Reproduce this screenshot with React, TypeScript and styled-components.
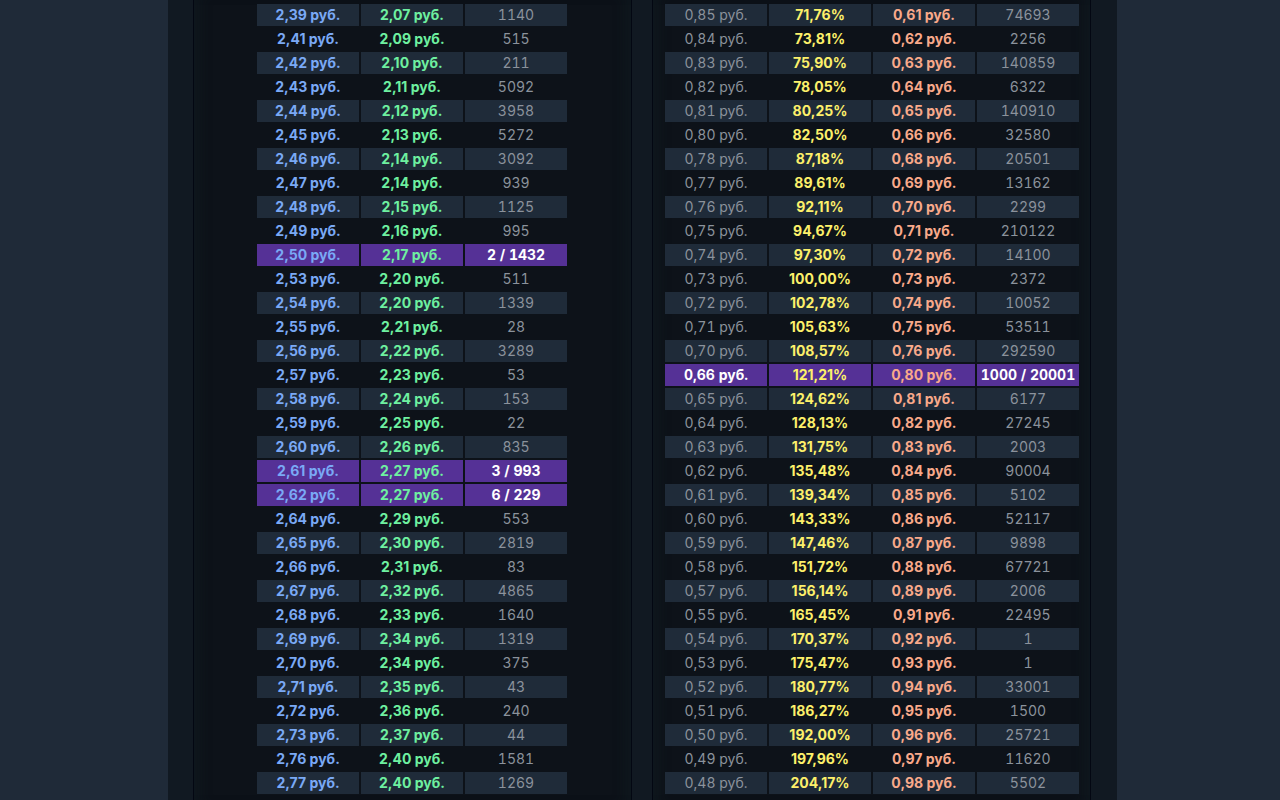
import React from 'react';
import styled, {createGlobalStyle} from 'styled-components';

const Global_Style = createGlobalStyle`
  html, body {
    margin: 0;
    height: 800px;
    overflow: hidden;
    background: #1f2a38;
  }
`;

const Page = styled.div`
  width: 1280px;
  height: 800px;
  overflow: hidden;
  display: flex;
  justify-content: flex-start;
  padding-left: 168px;
  box-sizing: border-box;
  font-family: Inter, 'Noto Sans', sans-serif;
`;

const Wrapper = styled.div`
  width: 949px;
  height: 800px;
  background: #111922;
  display: flex;
  padding-left: 25px;
  box-sizing: border-box;
  gap: 20px;
`;

const Panel = styled.div<{$width: number; $pad: number}>`
  width: ${(p) => p.$width}px;
  height: 800px;
  box-sizing: border-box;
  background: #0d1219;
  border-left: 1px solid #030712;
  border-right: 1px solid #030712;
  box-shadow: inset 14px 0 14px -10px rgba(20, 36, 44, 0.35),
    inset -14px 0 14px -10px rgba(20, 36, 44, 0.35);
  padding-left: ${(p) => p.$pad}px;
  padding-top: 4px;
  display: flex;
  flex-direction: column;
`;

const Row = styled.div<{$cols: number}>`
  display: grid;
  grid-template-columns: repeat(${(p) => p.$cols}, 102px);
  column-gap: 2px;
  height: 24px;
  flex-shrink: 0;
`;

type Tone = 'blue' | 'green' | 'muted' | 'yellow' | 'orange' | 'white';

const tones: Record<Tone, string> = {
  blue: '#7aa9f5',
  green: '#6ef0a0',
  muted: '#8b929c',
  yellow: '#fdf06a',
  orange: '#f9a98a',
  white: '#ffffff',
};

const Cell = styled.div<{$tone: Tone; $striped: boolean; $active: boolean}>`
  height: 22px;
  box-sizing: border-box;
  padding-bottom: 1px;
  display: flex;
  align-items: center;
  justify-content: center;
  font-size: 14px;
  white-space: nowrap;
  font-variant-numeric: ${(p) =>
    p.$tone === 'muted' || p.$tone === 'white' ? 'tabular-nums' : 'normal'};
  color: ${(p) => tones[p.$tone]};
  font-weight: ${(p) => (p.$tone === 'muted' ? 400 : 700)};
  background: ${(p) =>
    p.$active ? '#553196' : p.$striped ? '#1f2b39' : 'transparent'};
`;

const left_rows = [
  ['2,39', '2,07', '1140'],
  ['2,41', '2,09', '515'],
  ['2,42', '2,10', '211'],
  ['2,43', '2,11', '5092'],
  ['2,44', '2,12', '3958'],
  ['2,45', '2,13', '5272'],
  ['2,46', '2,14', '3092'],
  ['2,47', '2,14', '939'],
  ['2,48', '2,15', '1125'],
  ['2,49', '2,16', '995'],
  ['2,50', '2,17', '2 / 1432'],
  ['2,53', '2,20', '511'],
  ['2,54', '2,20', '1339'],
  ['2,55', '2,21', '28'],
  ['2,56', '2,22', '3289'],
  ['2,57', '2,23', '53'],
  ['2,58', '2,24', '153'],
  ['2,59', '2,25', '22'],
  ['2,60', '2,26', '835'],
  ['2,61', '2,27', '3 / 993'],
  ['2,62', '2,27', '6 / 229'],
  ['2,64', '2,29', '553'],
  ['2,65', '2,30', '2819'],
  ['2,66', '2,31', '83'],
  ['2,67', '2,32', '4865'],
  ['2,68', '2,33', '1640'],
  ['2,69', '2,34', '1319'],
  ['2,70', '2,34', '375'],
  ['2,71', '2,35', '43'],
  ['2,72', '2,36', '240'],
  ['2,73', '2,37', '44'],
  ['2,76', '2,40', '1581'],
  ['2,77', '2,40', '1269'],
];

const right_rows = [
  ['0,85', '71,76%', '0,61', '74693'],
  ['0,84', '73,81%', '0,62', '2256'],
  ['0,83', '75,90%', '0,63', '140859'],
  ['0,82', '78,05%', '0,64', '6322'],
  ['0,81', '80,25%', '0,65', '140910'],
  ['0,80', '82,50%', '0,66', '32580'],
  ['0,78', '87,18%', '0,68', '20501'],
  ['0,77', '89,61%', '0,69', '13162'],
  ['0,76', '92,11%', '0,70', '2299'],
  ['0,75', '94,67%', '0,71', '210122'],
  ['0,74', '97,30%', '0,72', '14100'],
  ['0,73', '100,00%', '0,73', '2372'],
  ['0,72', '102,78%', '0,74', '10052'],
  ['0,71', '105,63%', '0,75', '53511'],
  ['0,70', '108,57%', '0,76', '292590'],
  ['0,66', '121,21%', '0,80', '1000 / 20001'],
  ['0,65', '124,62%', '0,81', '6177'],
  ['0,64', '128,13%', '0,82', '27245'],
  ['0,63', '131,75%', '0,83', '2003'],
  ['0,62', '135,48%', '0,84', '90004'],
  ['0,61', '139,34%', '0,85', '5102'],
  ['0,60', '143,33%', '0,86', '52117'],
  ['0,59', '147,46%', '0,87', '9898'],
  ['0,58', '151,72%', '0,88', '67721'],
  ['0,57', '156,14%', '0,89', '2006'],
  ['0,55', '165,45%', '0,91', '22495'],
  ['0,54', '170,37%', '0,92', '1'],
  ['0,53', '175,47%', '0,93', '1'],
  ['0,52', '180,77%', '0,94', '33001'],
  ['0,51', '186,27%', '0,95', '1500'],
  ['0,50', '192,00%', '0,96', '25721'],
  ['0,49', '197,96%', '0,97', '11620'],
  ['0,48', '204,17%', '0,98', '5502'],
];

export default function App() {
  return (
    <>
      <Global_Style />
      <Page>
        <Wrapper>
          <Panel $width={439} $pad={63}>
            {left_rows.map((row, idx) => {
              const active = row[2].includes('/');
              return (
                <Row $cols={3} key={idx}>
                  <Cell $tone='blue' $striped={idx % 2 === 0} $active={active}>
                    {row[0]} руб.
                  </Cell>
                  <Cell $tone='green' $striped={idx % 2 === 0} $active={active}>
                    {row[1]} руб.
                  </Cell>
                  <Cell
                    $tone={active ? 'white' : 'muted'}
                    $striped={idx % 2 === 0}
                    $active={active}>
                    {row[2]}
                  </Cell>
                </Row>
              );
            })}
          </Panel>
          <Panel $width={439} $pad={12}>
            {right_rows.map((row, idx) => {
              const active = row[3].includes('/');
              return (
                <Row $cols={4} key={idx}>
                  <Cell
                    $tone={active ? 'white' : 'muted'}
                    $striped={idx % 2 === 0}
                    $active={active}>
                    {row[0]} руб.
                  </Cell>
                  <Cell $tone='yellow' $striped={idx % 2 === 0} $active={active}>
                    {row[1]}
                  </Cell>
                  <Cell $tone='orange' $striped={idx % 2 === 0} $active={active}>
                    {row[2]} руб.
                  </Cell>
                  <Cell
                    $tone={active ? 'white' : 'muted'}
                    $striped={idx % 2 === 0}
                    $active={active}>
                    {row[3]}
                  </Cell>
                </Row>
              );
            })}
          </Panel>
        </Wrapper>
      </Page>
    </>
  );
}
